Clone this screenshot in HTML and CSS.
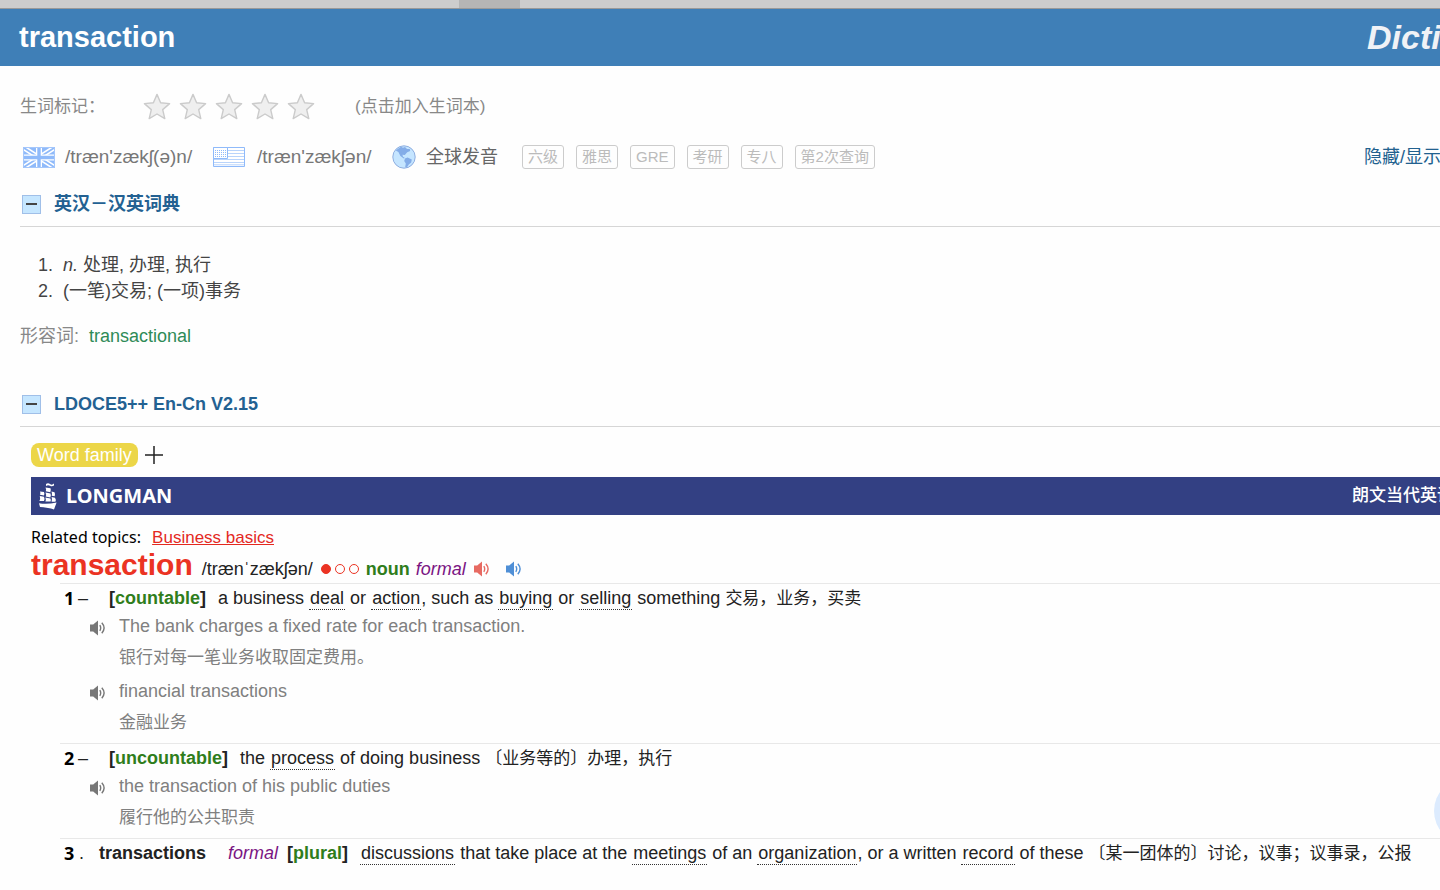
FILE: index.html
```
<!DOCTYPE html>
<html lang="zh-CN">
<head>
<meta charset="utf-8">
<title>transaction</title>
<link rel="stylesheet" href="styles.css">
</head>
<body>
<svg class="defs" aria-hidden="true">
  <symbol id="star" viewBox="0 0 28 28"><path d="M14 1.400l3.600 8.400 9 .8-6.900 6 2.100 9L14 21l-7.800 4.600 2.100-9-6.900-6 9-.8z" fill="#efefef" stroke="#cbcbcb" stroke-width="1.4" stroke-linejoin="round"/></symbol>
  <symbol id="speaker" viewBox="0 0 16 16"><path d="M0 4.600h3.200L8 .6v14.800l-4.800-4H0z" fill="currentColor"/><path d="M9.800 5.200q1.800 2.800 0 5.600M11.800 2.800q4.600 5.200 0 10.400" fill="none" stroke="currentColor" stroke-width="1.4"/></symbol>
</svg>
<div class="tabbar"><span class="tabbar-active"></span></div>
<header class="header">
  <h1 class="header-word">transaction</h1>
  <span class="header-brand">Dicti</span>
</header>
<main class="page">
  <div class="marks">
    <span class="marks-label">生词标记：</span>
    <div class="stars">
      <button class="star" aria-label="1"><svg><use href="#star"/></svg></button>
      <button class="star" aria-label="2"><svg><use href="#star"/></svg></button>
      <button class="star" aria-label="3"><svg><use href="#star"/></svg></button>
      <button class="star" aria-label="4"><svg><use href="#star"/></svg></button>
      <button class="star" aria-label="5"><svg><use href="#star"/></svg></button>
    </div>
    <span>(点击加入生词本)</span>
  </div>
  <div class="pron">
    <button class="pron-item pron-uk">
      <svg class="flag" viewBox="0 0 32 21"><path fill="#8fbafa" d="M0 0h32v21H0z"/><path d="M1 1l30 19M31 1L1 20" stroke="#fff" stroke-width="5"/><path d="M1 1l30 19M31 1L1 20" stroke="#8fbafa" stroke-width="1.8"/><path d="M16 1v19M1 10.500h30" stroke="#fff" stroke-width="6"/><path d="M16 0v21M0 10.500h32" stroke="#8fbafa" stroke-width="3.400"/><path d="M.5.5h31v20H.5z" fill="none" stroke="#a5c7fb"/></svg>
      <span>/træn'zækʃ(ə)n/</span>
    </button>
    <button class="pron-item pron-us">
      <svg class="flag" viewBox="0 0 32 21"><path fill="#fff" d="M.5.5h31v19H.5z" stroke="#8fbafa"/><path d="M1 3.500h30M1 6.500h30M1 9.500h30M1 12.500h30M1 15.500h30M1 17.800h30" stroke="#b9d4fb"/><path fill="#fff" stroke="#8fbafa" d="M.5.5h14v11H.5z"/><path d="M2 3.500h11M2 5.500h11M2 7.500h11M2 9.500h11" stroke="#8fbafa" stroke-dasharray="1 1"/></svg>
      <span>/træn'zækʃən/</span>
    </button>
    <button class="pron-item pron-global">
      <svg class="globe" viewBox="0 0 24 24"><circle cx="12" cy="12" r="11.200" fill="#c5e5ff" stroke="#8faee0"/><path d="M5 4.500l4-2.800 2 1 2-.8 2 2 2.800.2.400 2-3 1.200-2.400 2.600-2.400-.2.600 2 1.800 1.200-1 .6-3.400-2.400-2-4-2.600-1.600zM13 13.600l2.600-1.200 4.200 2.200-.6 2.800-2.400 2.200-2 3-1.600-.6.600-3.600-1.600-2.400z" fill="#83ace8"/></svg>
      <span>全球发音</span>
    </button>
    <ul class="tags">
      <li class="tag">六级</li><li class="tag">雅思</li><li class="tag">GRE</li><li class="tag">考研</li><li class="tag">专八</li><li class="tag">第2次查询</li>
    </ul>
    <a class="toggle-all" href="#dict">隐藏/显示</a>
  </div>

  <section id="dict">
    <h2 class="section-title"><button class="fold" aria-label="折叠"></button>英汉－汉英词典</h2>
    <ol class="senses">
      <li><i>n.</i> 处理, 办理, 执行</li>
      <li>(一笔)交易; (一项)事务</li>
    </ol>
    <p class="derived">形容词: <a href="#transactional">transactional</a></p>
  </section>

  <section>
    <h2 class="section-title"><button class="fold" aria-label="折叠"></button>LDOCE5++ En-Cn V2.15</h2>
    <div class="entry">
      <div class="family">
        <span class="family-tag">Word family</span>
        <button class="family-open" aria-label="展开"><svg viewBox="0 0 18 18"><path d="M9 0v18M0 9h18" stroke="#222" stroke-width="1.500"/></svg></button>
      </div>
      <div class="longman">
        <svg class="ship" viewBox="0 0 18 27"><g fill="#fff"><path d="M7 1q2-1.500 4 0t4-.4v2q-2 1.400-4 .2T7 3z"/><path d="M6.500 4.500l5 .8q.8 2-.2 4l-4.600-1q1-1.800-.2-3.800zM1 8.500l4 .6q.8 1.600 0 3.400l-4-.8q.8-1.600 0-3.200zM6.500 9.600l5 1q.8 2-.2 3.800l-4.600-.8q.8-2-.2-4zM12.500 8.500l3 .8q1 2 .2 4l-3-.6q.6-2-.2-4.200zM.8 13l4.200.8q1 2 0 4.200H.4q1.200-2.400.4-5zM6.400 14.600l5 .8q.8 1.600.2 3.200H6.400q.8-2 0-4zM12.600 14l3.400.8q1.400 2 .4 4h-3.800q.8-2.600 0-4.800z"/><path d="M0 20.200q8 1.600 17.600-.8L15 26.400q-3-1-6-1.400-5-1-8-1z"/></g></svg>
        <strong class="longman-name">LONGMAN</strong>
        <span class="longman-cn">朗文当代英语</span>
      </div>
      <p class="topics">Related topics: <a href="#business">Business basics</a></p>
      <div class="head">
        <strong class="head-word">transaction</strong>
        <span class="head-pron">/trænˈzækʃən/</span>
        <span class="freq"><i class="dot dot-full"></i><i class="dot"></i><i class="dot"></i></span>
        <b class="gram">noun</b>
        <em class="register">formal</em>
        <button class="sound sound-red" aria-label="英音"><svg><use href="#speaker"/></svg></button>
        <button class="sound sound-blue" aria-label="美音"><svg><use href="#speaker"/></svg></button>
      </div>

      <div class="sense">
        <p class="def"><b class="num">1</b><span class="dash">–</span><b class="label">[<span class="gram">countable</span>]</b><span>a business <a href="#deal">deal</a> or <a href="#action">action</a>, such as <a href="#buying">buying</a> or <a href="#selling">selling</a> something <span class="cn">交易，业务，买卖</span></span></p>
        <div class="example">
          <button class="sound" aria-label="播放"><svg><use href="#speaker"/></svg></button>
          <div><p class="example-en">The bank charges a fixed rate for each transaction.</p><p class="example-cn">银行对每一笔业务收取固定费用。</p></div>
        </div>
        <div class="example">
          <button class="sound" aria-label="播放"><svg><use href="#speaker"/></svg></button>
          <div><p class="example-en">financial transactions</p><p class="example-cn">金融业务</p></div>
        </div>
      </div>
      <div class="sense">
        <p class="def"><b class="num">2</b><span class="dash">–</span><b class="label">[<span class="gram">uncountable</span>]</b><span>the <a href="#process">process</a> of doing business <span class="cn">〔业务等的〕办理，执行</span></span></p>
        <div class="example">
          <button class="sound" aria-label="播放"><svg><use href="#speaker"/></svg></button>
          <div><p class="example-en">the transaction of his public duties</p><p class="example-cn">履行他的公共职责</p></div>
        </div>
      </div>
      <div class="sense">
        <p class="def"><b class="num">3</b><span class="stop">.</span><b class="variant">transactions</b><em class="register">formal</em><b class="label label-near">[<span class="gram">plural</span>]</b><span><a href="#discussions">discussions</a> that take place at the <a href="#meetings">meetings</a> of an <a href="#organization">organization</a>, or a written <a href="#record">record</a> of these <span class="cn">〔某一团体的〕讨论，议事；议事录，公报</span></span></p>
      </div>
    </div>
  </section>
</main>
<button class="float" aria-label="菜单"></button>
</body>
</html>
```

FILE: styles.css
```
* { box-sizing: border-box; }
body {
  margin: 0;
  min-height: 100vh;
  overflow: hidden;
  background: #fefefe;
  color: #444;
  font: 18px/26px "Liberation Sans", "Noto Sans CJK SC", sans-serif;
}
h1, h2, p, ul, ol { margin: 0; padding: 0; }
button { margin: 0; padding: 0; border: 0; background: none; color: inherit; font: inherit; }
svg { display: block; }
.defs { position: absolute; width: 0; height: 0; }

.tabbar { height: 9px; background: #cdcdcd; border-bottom: 1px solid #999; }
.tabbar-active { display: block; width: 61px; height: 8px; margin-left: 459px; background: #b5b5b5; }
.header {
  display: flex;
  align-items: center;
  justify-content: space-between;
  height: 57px;
  padding-left: 19px;
  background: #3f7fb7;
  color: #fff;
}
.header-word { font-size: 29px; line-height: 57px; }
.header-brand { width: 73px; overflow: hidden; color: #f0f2f6; font-size: 34px; font-style: italic; font-weight: bold; line-height: 57px; white-space: nowrap; }

.page { padding-left: 20px; }
.marks { display: flex; align-items: center; margin-top: 25px; color: #888; font-size: 17px; line-height: 32px; }
.marks-label { width: 123px; }
.stars { display: flex; gap: 8px; width: 212px; }
.star svg { width: 28px; height: 28px; }

.pron { display: flex; align-items: center; height: 32px; margin-top: 18px; color: #777; }
.pron-item { display: flex; align-items: center; font-size: 19px; text-align: left; white-space: nowrap; }
.pron-uk { width: 190px; padding-left: 3px; gap: 10px; }
.pron-us { width: 182px; padding-left: 3px; gap: 12px; }
.pron-global { width: 130px; gap: 10px; color: #666; font-size: 18px; }
.flag { width: 32px; height: 21px; }
.globe { width: 24px; height: 24px; }
.tags { display: flex; gap: 12px; list-style: none; }
.tag { padding: 0 5px; border: 1px solid #ccc; border-radius: 3px; color: #bbb; font-size: 15px; line-height: 22px; white-space: nowrap; }
.toggle-all { width: 76px; margin-left: auto; overflow: hidden; color: #22618f; text-decoration: none; white-space: nowrap; }

.section-title {
  display: flex;
  align-items: center;
  gap: 13px;
  margin-top: 17px;
  padding: 0 0 8px 2px;
  border-bottom: 1px solid #d6d6d6;
  color: #236192;
  font-size: 18px;
  line-height: 28px;
}
.fold { width: 19px; height: 19px; padding: 0 3px; border: 1px solid #a0bfe8; background: #c5e6ff; }
.fold::before { content: ""; display: block; height: 2px; background: #444; }
.senses { margin-top: 25px; padding-left: 38px; }
.senses li { padding-left: 5px; }
.derived { margin: 19px 0 41px; color: #888; }
.derived a { margin-left: 5px; color: #2e8b57; text-decoration: none; }

.entry { padding: 16px 0 0 11px; color: #222; }
.family { display: flex; align-items: center; gap: 7px; }
.family-tag { padding: 0 6px; border-radius: 8px; background: #ecd648; color: #fff; line-height: 24px; }
.family-open svg { width: 18px; height: 18px; }
.longman { display: flex; align-items: center; height: 38px; margin-top: 10px; padding-left: 8px; background: #334083; color: #fff; }
.ship { width: 18px; height: 27px; }
.longman-name { margin-left: 9px; font: bold 20px/38px "Noto Sans", sans-serif; }
.longman-cn { width: 88px; margin-left: auto; overflow: hidden; font-size: 17px; font-weight: 500; white-space: nowrap; }
.topics { margin-top: 10px; color: #000; font: 16px/24px "Noto Sans", sans-serif; }
.topics a { margin-left: 7px; color: #e4291f; font: 17px/24px "Liberation Sans", sans-serif; }
.head { display: flex; align-items: baseline; height: 33px; line-height: 30px; }
.head-word { color: #eb3323; font-size: 30px; }
.head-pron { width: 119px; margin-left: 9px; white-space: nowrap; }
.freq { display: flex; gap: 4px; align-self: center; width: 45px; margin-top: 4px; }
.dot { width: 10px; height: 10px; border: 1px solid #eb3323; border-radius: 50%; }
.dot-full { background: #eb3323; }
.gram { color: #2f7d1b; }
.register { margin-left: 6px; color: #7b1583; }
.sound { color: #777; }
.sound svg { width: 16px; height: 16px; }
.head .sound { align-self: center; margin: 4px 0 0 8px; }
.head .sound-red { color: #e76a62; }
.head .sound-blue { margin-left: 16px; color: #4f8fd6; }

.sense { margin-left: 29px; border-top: 1px solid #e8e8e8; }
.def { display: flex; padding-left: 4px; line-height: 28px; white-space: nowrap; }
.def a { padding: 0 1px 1px; border-bottom: 1px dotted #333; color: inherit; text-decoration: none; }
.num { width: 14px; color: #000; font-family: "Noto Sans", sans-serif; }
.dash { width: 31px; }
.stop { width: 21px; padding-left: 1px; }
.label { margin-right: 12px; }
.label-near { margin-left: 9px; }
.variant { margin-right: 16px; }
.cn { font-size: 17px; }
.example { display: flex; gap: 13px; margin-bottom: 5px; padding-left: 30px; color: #808080; }
.example .sound { align-self: flex-start; margin-top: 7px; }
.example-en { line-height: 26px; }
.example-cn { padding-top: 4px; font-size: 17px; line-height: 30px; }
.float { position: fixed; right: -60px; bottom: 46px; width: 66px; height: 66px; border-radius: 50%; background: #dcebfe; }
```
